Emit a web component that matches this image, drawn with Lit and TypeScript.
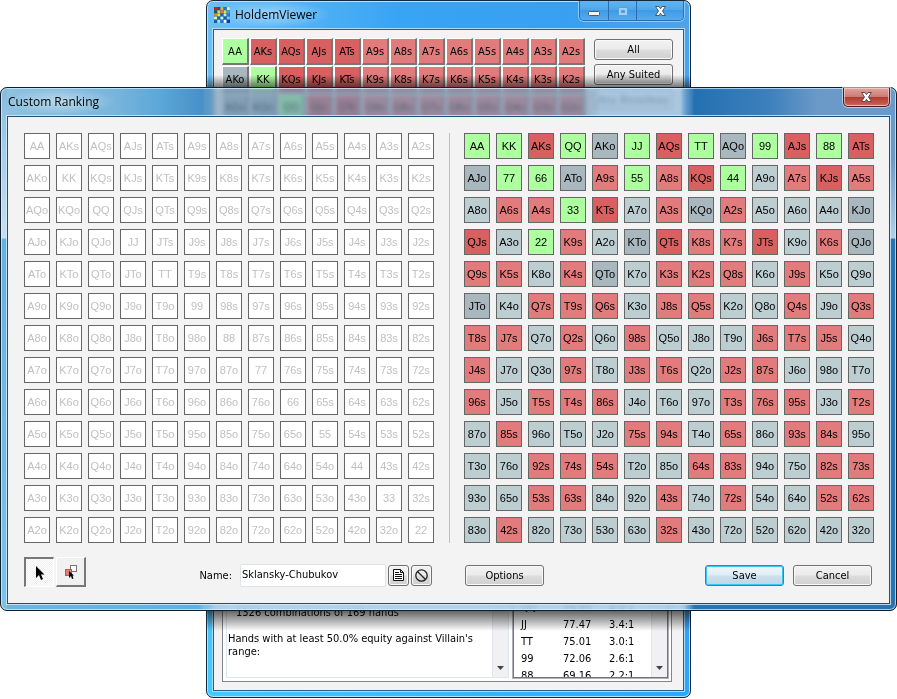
import { LitElement, html, svg, css } from "lit";
import { customElement, property, state } from "lit/decorators.js";
import { classMap } from "lit/directives/class-map.js";

const RANKS = "AKQJT98765432".split("");

/** All 169 starting hands, row by row of the 13 x 13 chart. */
const CHART: string[] = RANKS.flatMap((row, i) =>
  RANKS.map((col, j) => (i === j ? row + col : j > i ? row + col + "s" : col + row + "o")),
);

/** The viewer lists only the hands of its three highest ranks. */
const TOP_ROWS = CHART.slice(0, 39);

const SKLANSKY_CHUBUKOV = `
AA KK AKs QQ AKo JJ AQs TT AQo 99 AJs 88 ATs
AJo 77 66 ATo A9s 55 A8s KQs 44 A9o A7s KJs A5s
A8o A6s A4s 33 KTs A7o A3s KQo A2s A5o A6o A4o KJo
QJs A3o 22 K9s A2o KTo QTs K8s K7s JTs K9o K6s QJo
Q9s K5s K8o K4s QTo K7o K3s K2s Q8s K6o J9s K5o Q9o
JTo K4o Q7s T9s Q6s K3o J8s Q5s K2o Q8o Q4s J9o Q3s
T8s J7s Q7o Q2s Q6o 98s Q5o J8o T9o J6s T7s J5s Q4o
J4s J7o Q3o 97s T8o J3s T6s Q2o J2s 87s J6o 98o T7o
96s J5o T5s T4s 86s J4o T6o 97o T3s 76s 95s J3o T2s
87o 85s 96o T5o J2o 75s 94s T4o 65s 86o 93s 84s 95o
T3o 76o 92s 74s 54s T2o 85o 64s 83s 94o 75o 82s 73s
93o 65o 53s 63s 84o 92o 43s 74o 72s 54o 64o 52s 62s
83o 42s 82o 73o 53o 63o 32s 43o 72o 52o 62o 42o 32o`
  .trim()
  .split(/\s+/);

const ODDS = [
  ["QQ", "79.93", "4.0:1"],
  ["JJ", "77.47", "3.4:1"],
  ["TT", "75.01", "3.0:1"],
  ["99", "72.06", "2.6:1"],
  ["88", "69.16", "2.2:1"],
];

/** Colour group of a hand: pair, or suited / offsuit, split by two broadway cards. */
function tone(hand: string): string {
  if (hand.length === 2) return "pair";
  const high = "AKQJT".includes(hand[0]) && "AKQJT".includes(hand[1]);
  return (hand[2] === "s" ? "suited" : "offsuit") + (high ? "-high" : "");
}

const tones = css`
  .pair { background: #adff9f; }
  .suited-high { background: #d86060; }
  .suited { background: #e27c7c; }
  .offsuit-high { background: #a9b8be; }
  .offsuit { background: #bdced3; }
`;

const buttons = css`
  button {
    font-family: inherit;
    font-size: inherit;
    color: #000;
    padding: 0;
    margin: 0;
    box-sizing: border-box;
  }
  .push {
    width: 79px;
    height: 21px;
    border: 1px solid #707070;
    border-radius: 3px;
    background: linear-gradient(#f2f2f2, #ebebeb 48%, #dddddd 52%, #cfcfcf);
    box-shadow: inset 0 0 0 1px #fafafa;
    line-height: 19px;
    white-space: nowrap;
  }
  .push.default {
    border-color: #3c7fb1;
    box-shadow: inset 0 0 0 1px #38c6f8;
    background: linear-gradient(#eef6fa, #e0edf5 48%, #cde0ec 52%, #bdd6e6);
  }
`;

const APP_ICON = [
  ["#e81010", "#28506a", "#f8b028", "#187ac0", "#f0e8a0"],
  ["#28506a", "#f8c830", "#f07818", "#e8e048", "#38a8e0"],
  ["#b8a020", "#f0e040", "#1068c8", "#b8f0e0", "#2080d8"],
  ["#f8f0a8", "#1868a8", "#d0f8f0", "#1858b0", "#70d0f0"],
  ["#1060a8", "#a8e8f8", "#1878d8", "#f0ffff", "#1030e0"],
];

@customElement("hand-board")
export class HandBoard extends LitElement {
  @property({ attribute: false }) hands: string[] = [];
  @property({ type: Boolean }) used = false;

  static styles = [
    tones,
    css`
      :host { display: block; }
      .board {
        display: grid;
        grid-template-columns: repeat(13, 26px);
        grid-auto-rows: 26px;
        gap: 6px;
      }
      .card {
        border: 1px solid #666;
        display: flex;
        align-items: center;
        justify-content: center;
        font: 11px/24px "Liberation Sans", Arial, sans-serif;
        color: #000;
      }
      .card.used {
        background: #fff;
        color: #c0c0c0;
      }
    `,
  ];

  render() {
    return html`<div class="board">
      ${this.hands.map(
        (hand) => html`<div class="card ${this.used ? "used" : tone(hand)}">${hand}</div>`,
      )}
    </div>`;
  }
}

@customElement("viewer-window")
export class ViewerWindow extends LitElement {
  static styles = [
    tones,
    buttons,
    css`
      :host {
        display: flex;
        flex-direction: column;
        box-sizing: border-box;
        border: 1px solid #12283c;
        border-radius: 7px;
        padding: 0 6px 6px;
        overflow: hidden;
        font: 11px/13px "DejaVu Sans Condensed", "DejaVu Sans", sans-serif;
        background:
          linear-gradient(#6cc0f8, #58b8f4 70%, #40ccff) left / 6px 100% no-repeat,
          linear-gradient(#4ca4ec, #3c9ce8 70%, #28a8ff) right / 6px 100% no-repeat,
          linear-gradient(90deg, #40ccff, #28a8ff) bottom / 100% 6px no-repeat,
          linear-gradient(90deg, #6cc0f8, #38a4f4 40%, #38a0f0 75%, #4ca4ec);
        box-shadow: inset 0 0 0 1px #b4e2ff;
      }
      .title {
        height: 28px;
        display: flex;
        justify-content: space-between;
        align-items: flex-start;
      }
      .name {
        display: flex;
        align-items: center;
        gap: 5px;
        height: 27px;
        padding: 0 14px 0 1px;
        background: radial-gradient(closest-side, rgba(255, 255, 255, 0.4), rgba(255, 255, 255, 0));
        font: 12px/16px "Open Sans", sans-serif;
      }
      .icon { display: block; }
      .caption {
        display: flex;
        height: 19px;
        border: 1px solid #2a6db0;
        border-top: 0;
        border-radius: 0 0 5px 5px;
        overflow: hidden;
        box-shadow: 0 0 0 1px #8ccbf8;
      }
      .caption button {
        border: 0;
        width: 28px;
        background: linear-gradient(#62b4f0, #4ca6ec 50%, #3f9be6 50%, #56aaf0);
        display: flex;
        justify-content: center;
        align-items: center;
      }
      .caption button + button { border-left: 1px solid #2a6db0; }
      .caption .close { width: 47px; }
      .body {
        flex: 1;
        display: flex;
        flex-direction: column;
        justify-content: space-between;
        border: 1px solid #2c5f84;
        box-shadow: 0 0 0 1px #a8dafa;
        background: #f3f3f3;
        padding: 8px;
      }
      .upper { display: flex; gap: 9px; }
      .hands {
        display: grid;
        grid-template-columns: repeat(13, 27px);
        grid-auto-rows: 27px;
        gap: 1px;
      }
      .hand {
        border: 1px solid;
        border-width: 1px 2px 2px 1px;
        border-color: #fff #777 #777 #fff;
        padding-top: 2px;
        line-height: 22px;
        white-space: nowrap;
      }
      .filters {
        display: flex;
        flex-direction: column;
        gap: 4px;
        padding-top: 1px;
      }
      .results {
        display: flex;
        gap: 4px;
        height: 111px;
        box-sizing: border-box;
        border: 1px solid #85858f;
        background: #fff;
        padding: 3px;
        margin-right: 3px;
      }
      .report {
        flex: 1;
        display: flex;
        border: 1px solid #dfe6ef;
        overflow: hidden;
      }
      .text { flex: 1; padding: 30px 0 0 1px; }
      .text p { margin: 0 0 13px; }
      .text .indent { padding-left: 8px; }
      .scroll {
        width: 16px;
        background: #f1f1f3;
        border-left: 1px solid #e3e3e8;
        display: flex;
        align-items: flex-end;
        justify-content: center;
        padding-bottom: 7px;
        box-sizing: border-box;
      }
      .odds {
        display: flex;
        width: 153px;
        border: 1px solid #74747c;
        outline: 1px solid #b0b0b8;
        overflow: hidden;
        align-items: stretch;
      }
      .pane { flex: 1; overflow: hidden; height: 102px; }
      table { border-collapse: collapse; margin-top: 23px; }
      td {
        padding: 0 0 0 7px;
        height: 17px;
        width: 35px;
      }
      td + td + td { padding-left: 11px; }
    `,
  ];

  render() {
    return html`
      <div class="title">
        <div class="name">
          <svg class="icon" width="16" height="16" viewBox="0 0 15 15" aria-hidden="true">
            ${APP_ICON.map((row, y) =>
              row.map((fill, x) => svg`<rect x=${x * 3} y=${y * 3} width="3" height="3" fill=${fill} stroke="#1a5a90" stroke-width="0.2"/>`),
            )}
          </svg>
          <span>HoldemViewer</span>
        </div>
        <div class="caption">
          <button aria-label="Minimize">
            <svg width="14" height="14"><rect x="1.5" y="7.5" width="11" height="4" rx="1" fill="#f4f4f4" stroke="#4a5a6a"/></svg>
          </button>
          <button aria-label="Maximize" disabled>
            <svg width="12" height="12"><path d="M1.5 2.5h9v8h-9zM4.5 5.5v2h3v-2z" fill="#9fd0f6" fill-rule="evenodd" stroke="#5f9fd8"/></svg>
          </button>
          <button class="close" aria-label="Close">
            <svg width="13" height="12" viewBox="0 0 13 12"><path d="M1.5 1.5H5L6.5 3.7 8 1.5h3.500L8.500 6l3 4.500H8L6.500 8.300 5 10.500H1.500L4.500 6z" fill="#f6f6f6" stroke="#4a5a6a"/></svg>
          </button>
        </div>
      </div>
      <div class="body">
        <div class="upper">
          <div class="hands">
            ${TOP_ROWS.map((hand) => html`<button class="hand ${tone(hand)}">${hand}</button>`)}
          </div>
          <div class="filters">
            ${["All", "Any Suited", "Any Broadway"].map(
              (label) => html`<button class="push">${label}</button>`,
            )}
          </div>
        </div>
        <div class="results">
          <div class="report">
            <div class="text">
              <p class="indent">1326 combinations of 169 hands</p>
              <p>Hands with at least 50.0% equity against Villain's range:</p>
            </div>
            <div class="scroll">${this.arrow()}</div>
          </div>
          <div class="odds">
            <div class="pane">
              <table>
                ${ODDS.map((row) => html`<tr>${row.map((value) => html`<td>${value}</td>`)}</tr>`)}
              </table>
            </div>
            <div class="scroll">${this.arrow()}</div>
          </div>
        </div>
      </div>
    `;
  }

  private arrow() {
    return html`<svg width="7" height="4" aria-hidden="true"><path d="M0 0h7L3.500 4z" fill="#444"/></svg>`;
  }
}

@customElement("ranking-dialog")
export class RankingDialog extends LitElement {
  @state() private tool: "select" | "move" = "select";

  static styles = [
    buttons,
    css`
      :host {
        display: block;
        position: relative;
        font: 11px/13px "DejaVu Sans Condensed", "DejaVu Sans", sans-serif;
      }
      .shade {
        position: absolute;
        inset: -12px max(0px, calc(50% - 242px)) -20px;
        background: linear-gradient(
          transparent,
          rgba(0, 0, 0, 0.5) 12px,
          transparent 12px,
          transparent calc(100% - 20px),
          rgba(0, 0, 0, 0.6) calc(100% - 20px),
          transparent
        );
      }
      .window {
        position: relative;
        box-sizing: border-box;
        border: 1px solid #10202e;
        border-radius: 7px;
        padding: 0 6px 6px;
        backdrop-filter: blur(2px) brightness(0.7) saturate(1.2);
        background:
          linear-gradient(#86bbdc, #a4cce8 60px, #c8dff2 150px, #64b2e2 151px, #7ac2ea) left / 6px 100% no-repeat,
          linear-gradient(#6c9ac8, #6c9ac8 70px, #b4cee8 150px, #2674b6 151px, #2674b6) right / 6px 100% no-repeat,
          linear-gradient(
            90deg,
            #6cb6e2,
            #5cb2e4 calc(50% - 250px),
            rgba(176, 218, 250, 0.8) calc(50% - 236px),
            rgba(176, 218, 250, 0.8) calc(50% + 236px),
            #2674b6 calc(50% + 246px),
            #2674b6
          ) bottom / 100% 6px no-repeat,
          linear-gradient(
            90deg,
            #90c2e0,
            #7ab6dc 110px,
            #5ca8d8 calc(50% - 290px),
            #4890c8 calc(50% - 246px),
            rgba(146, 190, 230, 0.5) calc(50% - 234px),
            rgba(146, 190, 230, 0.5) calc(50% + 140px),
            rgba(170, 212, 246, 0.7) calc(50% + 152px),
            rgba(170, 212, 246, 0.7) calc(50% + 232px),
            #2470b0 calc(50% + 246px),
            #3c80bc calc(50% + 320px),
            #6c9ac8 calc(50% + 370px),
            #6c9ac8
          ) top / 100% 29px no-repeat;
        box-shadow: inset 0 0 0 1px rgba(220, 242, 255, 0.7);
      }
      .title {
        height: 28px;
        display: flex;
        justify-content: space-between;
        align-items: flex-start;
      }
      .name {
        margin: 0;
        padding: 0 16px 0 1px;
        font: 12px/27px "Open Sans", sans-serif;
        background: radial-gradient(closest-side, rgba(255, 255, 255, 0.45), rgba(255, 255, 255, 0));
      }
      .close {
        width: 47px;
        height: 19px;
        border: 1px solid #4a1c20;
        border-top: 0;
        border-radius: 0 0 5px 5px;
        background: linear-gradient(#e0a49c, #cc7c74 48%, #b03a30 50%, #c45c50 90%, #d88478);
        box-shadow: inset 0 0 0 1px rgba(255, 220, 215, 0.6), 0 0 0 1px rgba(220, 236, 250, 0.6);
        display: flex;
        align-items: center;
        justify-content: center;
      }
      .body {
        border: 1px solid #1f4f74;
        box-shadow: 0 0 0 1px rgba(215, 238, 252, 0.8);
        background: #f3f3f3;
        padding: 16px 15px 16px 16px;
        display: grid;
        grid-template-columns: auto auto auto;
        justify-content: space-between;
        row-gap: 14px;
      }
      .rule { width: 1px; background: #c0c0c0; }
      .left,
      .right {
        display: flex;
        align-items: center;
        height: 30px;
      }
      .right {
        grid-column: 3;
        padding: 6px 2px 0 1px;
        gap: 9px;
        box-sizing: border-box;
      }
      .left { padding-right: 2px; gap: 2px; }
      .right .push:first-child { margin-right: auto; }
      .tool {
        width: 30px;
        height: 30px;
        border: 1px solid;
        border-width: 1px 2px 2px 1px;
        border-color: #fff #777 #777 #fff;
        background: #f1f1f1;
        display: flex;
        align-items: center;
        justify-content: center;
      }
      .tool.active {
        border-width: 2px 1px 1px 2px;
        border-color: #777 #fff #fff #777;
        background: repeating-conic-gradient(#fff 0 25%, #f0f0f0 0 50%) 0 0 / 2px 2px;
      }
      .field {
        display: flex;
        align-items: center;
        gap: 8px;
        margin-left: auto;
        padding-top: 6px;
      }
      input {
        width: 146px;
        height: 23px;
        box-sizing: border-box;
        border: 1px solid #dce4ee;
        border-radius: 2px;
        background: #fff;
        padding: 0 2px 2px 1px;
        font: inherit;
        color: #000;
      }
      .mini {
        width: 21px;
        height: 21px;
        margin-top: 6px;
        display: flex;
        align-items: center;
        justify-content: center;
      }
    `,
  ];

  render() {
    return html`
      <div class="shade"></div>
      <div class="window" role="dialog" aria-labelledby="title">
        <div class="title">
          <h1 class="name" id="title">Custom Ranking</h1>
          <button class="close" aria-label="Close">
            <svg width="13" height="12" viewBox="0 0 13 12"><path d="M1.500 1.500H5L6.500 3.700 8 1.500h3.500L8.500 6l3 4.500H8L6.500 8.300 5 10.500H1.500L4.500 6z" fill="#fff" stroke="#5a4a54"/></svg>
          </button>
        </div>
        <div class="body">
          <hand-board .hands=${CHART} used></hand-board>
          <div class="rule"></div>
          <hand-board .hands=${SKLANSKY_CHUBUKOV}></hand-board>
          <div class="left">
            <button
              class=${classMap({ tool: true, active: this.tool === "select" })}
              aria-label="Select"
              @click=${() => (this.tool = "select")}
            >
              <svg width="10" height="16" viewBox="0 0 10 16"><path d="M1 1v12l3-3 2 5 2-1-2-4.500h3.500z" fill="#000"/></svg>
            </button>
            <button
              class=${classMap({ tool: true, active: this.tool === "move" })}
              aria-label="Move"
              @click=${() => (this.tool = "move")}
            >
              <svg width="14" height="16" viewBox="0 0 14 16">
                <rect x="6.500" y="1.500" width="6" height="6" fill="#fff" stroke="#777"/>
                <rect x="1.500" y="5.500" width="6" height="6" fill="#e27c7c" stroke="#d05050"/>
                <path d="M5 7v7l2-2 1 3 1.500-.5-1-3H10z" fill="#000"/>
              </svg>
            </button>
            <div class="field">
              <label for="name">Name:</label>
              <input id="name" type="text" value="Sklansky-Chubukov" />
            </div>
            <button class="push mini" aria-label="Edit description">
              <svg width="13" height="14" viewBox="0 0 13 14"><path d="M1.500 1.500h7l3 3v8h-10zM8.500 1.500v3h3" fill="#fff" stroke="#111"/><path d="M3 4.500h4M3 6.500h7M3 8.500h7M3 10.500h7" stroke="#111"/></svg>
            </button>
            <button class="push mini" aria-label="Clear">
              <svg width="15" height="15" viewBox="0 0 15 15"><circle cx="7.500" cy="7.500" r="5.700" fill="none" stroke="#222" stroke-width="1.300"/><path d="M3.500 3.500l8 8" stroke="#222" stroke-width="1.300"/></svg>
            </button>
          </div>
          <div class="right">
            <button class="push">Options</button>
            <button class="push default">Save</button>
            <button class="push">Cancel</button>
          </div>
        </div>
      </div>
    `;
  }
}

@customElement("app-root")
export class AppRoot extends LitElement {
  static styles = css`
    :host {
      display: grid;
      grid-template-columns: minmax(0, 1fr);
      box-sizing: border-box;
      min-height: 100vh;
      padding-bottom: 1px;
      background: #fff;
    }
    viewer-window,
    ranking-dialog {
      grid-area: 1 / 1;
    }
    viewer-window {
      width: min(485px, 100%);
      justify-self: center;
    }
    ranking-dialog {
      align-self: center;
    }
  `;

  render() {
    return html`
      <viewer-window></viewer-window>
      <ranking-dialog></ranking-dialog>
    `;
  }
}
